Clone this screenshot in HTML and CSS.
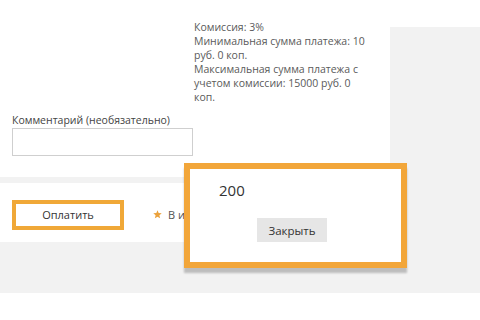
FILE: index.html
```html
<!DOCTYPE html>
<html>
<head>
<meta charset="utf-8">
<link rel="stylesheet" href="styles.css">
</head>
<body>
<div class="stage">
  <div class="left">
    <div class="card card-main">
      <div class="info">Комиссия: 3%<br>Минимальная сумма платежа: 10 руб. 0 коп.<br>Максимальная сумма платежа с учетом комиссии: 15000 руб. 0 коп.</div>
      <div class="comment">
        <div class="label">Комментарий (необязательно)</div>
        <div class="input"></div>
      </div>
    </div>
    <div class="card card-foot">
      <div class="pay">Оплатить</div>
      <div class="fav">
        <svg class="star" viewBox="0 0 10 10" width="9" height="9"><path d="M5 0.3 L6.3 3.4 L9.7 3.6 L7.1 5.8 L7.9 9.2 L5 7.4 L2.1 9.2 L2.9 5.8 L0.3 3.6 L3.7 3.4 Z" fill="#eba23c"/></svg>
        <span>В избранное</span>
      </div>
    </div>
  </div>
  <div class="right"></div>
</div>
<div class="popup">
  <div class="amount">200</div>
  <div class="close">Закрыть</div>
</div>
</body>
</html>
```

FILE: styles.css
```css
html, body {
  margin: 0;
  padding: 0;
  background: #ffffff;
  width: 480px;
  height: 320px;
  overflow: hidden;
  font-family: "Open Sans", "DejaVu Sans", sans-serif;
  color: #444;
}
.stage {
  display: grid;
  grid-template-columns: 390px 90px;
  height: 293px;
  position: relative;
}
.left {
  background: #f2f2f2;
  display: flex;
  flex-direction: column;
  gap: 6px;
}
.right {
  background: #f2f2f2;
  margin-top: 27px;
}
.card {
  background: #fff;
}
.card-main {
  height: 177px;
  display: flex;
  flex-direction: column;
}
.info {
  margin-top: 20px;
  margin-left: 194px;
  width: 180px;
  font-size: 10.5px;
  line-height: 14px;
  color: #5a5a5a;
}
.comment {
  margin-top: 9px;
  margin-left: 12px;
}
.label {
  font-size: 10.5px;
  line-height: 14px;
  color: #444;
}
.input {
  margin-top: 1px;
  width: 179px;
  height: 26px;
  border: 1px solid #cfcfcf;
  background: #fff;
}
.card-foot {
  height: 59px;
  display: flex;
  align-items: center;
  padding-left: 12px;
  gap: 29px;
}
.pay {
  width: 104px;
  height: 22px;
  border: 4px solid #f0a838;
  display: flex;
  align-items: center;
  justify-content: center;
  font-size: 11px;
  color: #333;
  margin-top: 4px;
}
.fav {
  display: flex;
  align-items: center;
  gap: 6px;
  font-size: 11px;
  color: #555;
  margin-top: 4px;
}
.popup {
  position: absolute;
  left: 184px;
  top: 163px;
  width: 211px;
  height: 93px;
  border: 6px solid #f2a63a;
  background: #fff;
  box-shadow: 0 5px 2px rgba(0, 0, 0, 0.22);
  display: flex;
  flex-direction: column;
}
.amount {
  margin-top: 12px;
  margin-left: 29px;
  font-size: 15px;
  line-height: 18px;
  color: #333;
}
.close {
  align-self: flex-start;
  margin-left: 67px;
  margin-top: 19px;
  width: 70px;
  height: 24px;
  background: #e6e6e6;
  display: flex;
  align-items: center;
  justify-content: center;
  font-size: 11.5px;
  color: #333;
}
```
